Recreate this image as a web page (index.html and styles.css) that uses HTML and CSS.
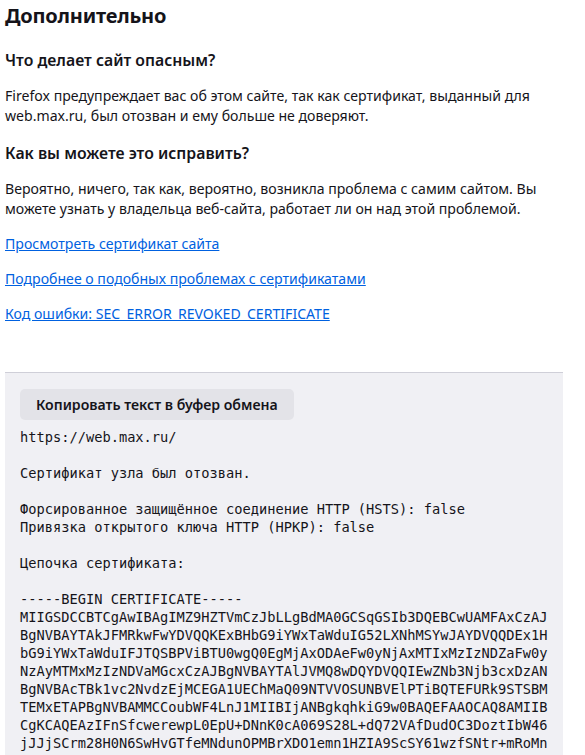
FILE: index.html
```html
<!DOCTYPE html>
<html lang="ru">
<head>
<meta charset="utf-8">
<link rel="stylesheet" href="styles.css">
</head>
<body>
<main class="page">
  <h1 class="title">Дополнительно</h1>
  <h2 class="subtitle first">Что делает сайт опасным?</h2>
  <p class="text">Firefox предупреждает вас об этом сайте, так как сертификат, выданный для web.max.ru, был отозван и ему больше не доверяют.</p>
  <h2 class="subtitle">Как вы можете это исправить?</h2>
  <p class="text">Вероятно, ничего, так как, вероятно, возникла проблема с самим сайтом. Вы можете узнать у владельца веб-сайта, работает ли он над этой проблемой.</p>
  <p class="text"><a class="link" href="#">Просмотреть сертификат сайта</a></p>
  <p class="text"><a class="link" href="#">Подробнее о подобных проблемах с сертификатами</a></p>
  <p class="text"><a class="link" href="#">Код ошибки: SEC_ERROR_REVOKED_CERTIFICATE</a></p>
  <section class="debug">
    <button class="copy" type="button">Копировать текст в буфер обмена</button>
<pre class="cert">https://web.max.ru/

Сертификат узла был отозван.

Форсированное защищённое соединение HTTP (HSTS): false
Привязка открытого ключа HTTP (HPKP): false

Цепочка сертификата:

-----BEGIN CERTIFICATE-----
MIIGSDCCBTCgAwIBAgIMZ9HZTVmCzJbLLgBdMA0GCSqGSIb3DQEBCwUAMFAxCzAJ
BgNVBAYTAkJFMRkwFwYDVQQKExBHbG9iYWxTaWduIG52LXNhMSYwJAYDVQQDEx1H
bG9iYWxTaWduIFJTQSBPViBTU0wgQ0EgMjAxODAeFw0yNjAxMTIxMzIzNDZaFw0y
NzAyMTMxMzIzNDVaMGcxCzAJBgNVBAYTAlJVMQ8wDQYDVQQIEwZNb3Njb3cxDzAN
BgNVBAcTBk1vc2NvdzEjMCEGA1UEChMaQ09NTVVOSUNBVElPTiBQTEFURk9STSBM
TEMxETAPBgNVBAMMCCoubWF4LnJ1MIIBIjANBgkqhkiG9w0BAQEFAAOCAQ8AMIIB
CgKCAQEAzIFnSfcwerewpL0EpU+DNnK0cA069S28L+dQ72VAfDudOC3DoztIbW46
jJJjSCrm28H0N6SwHvGTfeMNdunOPMBrXDO1emn1HZIA9ScSY61wzfSNtr+mRoMn
dWQNUFEQ8AgQJzh3Yvmp1KuNFBaJxLLAU7u3FO7Nl4QQA3WzFZVqosJ0JwzAbMI4</pre>
  </section>
</main>
</body>
</html>
```

FILE: styles.css
```css
html, body {
  margin: 0;
  padding: 0;
  background: #ffffff;
}

body {
  font-family: "Noto Sans", "Open Sans", sans-serif;
  color: #15141a;
  font-size: 14.1px;
}

.page {
  width: 558px;
  padding: 0 0 0 5px;
}

.title {
  margin: 2px 0 0;
  font-size: 20px;
  font-weight: 700;
  line-height: 27px;
  letter-spacing: -0.2px;
}

.subtitle {
  margin: 16px 0 0;
  font-size: 15.8px;
  font-weight: 600;
  line-height: 22px;
}

.subtitle.first {
  margin-top: 20px;
}

.text {
  margin: 15px 0 0;
  line-height: 20px;
}

.link {
  color: #0061e0;
  text-decoration: underline;
}

.debug {
  margin-top: 48px;
  background: #f0f0f4;
  border-top: 1px solid #cfcfd8;
  padding: 16px 0 0 15px;
}

.copy {
  display: block;
  height: 31px;
  padding: 0 16px;
  border: none;
  border-radius: 5px;
  background: #e3e3e8;
  color: #15141a;
  font-family: "Noto Sans", "Open Sans", sans-serif;
  font-size: 14.1px;
  font-weight: 600;
}

.cert {
  margin: 8px 0 0;
  font-family: "DejaVu Sans Mono", monospace;
  font-size: 13.7px;
  line-height: 18px;
  color: #15141a;
  white-space: pre;
}
```
